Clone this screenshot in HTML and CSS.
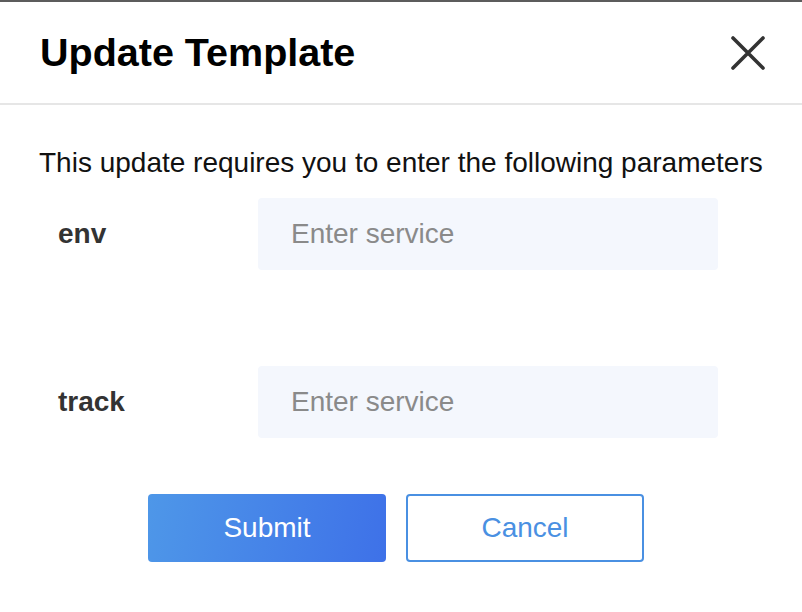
FILE: index.html
```html
<!DOCTYPE html>
<html>
<head>
<meta charset="utf-8">
<link rel="stylesheet" href="styles.css">
</head>
<body>
<div class="topband"></div>
<div class="dialog">
  <header class="head">
    <h1 class="title">Update Template</h1>
    <button class="close" aria-label="Close">
      <svg width="36" height="36" viewBox="0 0 36 36"><path d="M3 3 L33 33 M33 3 L3 33" stroke="#333" stroke-width="3.6" stroke-linecap="round" fill="none"/></svg>
    </button>
  </header>
  <div class="body">
    <p class="intro">This update requires you to enter the following parameters</p>
    <div class="row">
      <label class="label">env</label>
      <input class="field" placeholder="Enter service">
    </div>
    <div class="row">
      <label class="label">track</label>
      <input class="field" placeholder="Enter service">
    </div>
    <div class="actions">
      <button class="btn primary">Submit</button>
      <button class="btn ghost">Cancel</button>
    </div>
  </div>
</div>
</body>
</html>
```
FILE: styles.css
```css
* { box-sizing: border-box; }
html, body { margin: 0; padding: 0; background: #fff; }
body { font-family: "Liberation Sans", Arial, sans-serif; color: #111; }
.topband { height: 2px; background: #5c5c5c; }
.dialog { background: #fff; }
.head {
  height: 103px;
  border-bottom: 2px solid #e6e6e6;
  display: flex;
  align-items: center;
  justify-content: space-between;
  padding: 0 36px 0 40px;
}
.title { margin: 0; font-size: 39.5px; font-weight: bold; color: #000; }
.close { border: 0; background: none; padding: 0; width: 36px; height: 36px; display: flex; }
.body { padding: 40px 0 0 39px; }
.intro { margin: 0; font-size: 28px; line-height: 36px; color: #111; }
.row { display: flex; align-items: center; margin-top: 17px; margin-bottom: 96px; }
.row + .row { margin-top: 0; margin-bottom: 56px; }
.label { width: 219px; padding-left: 19px; font-size: 28px; font-weight: bold; color: #333; }
.field {
  width: 460px; height: 72px; border: 0; border-radius: 4px;
  background: #f4f7fd; padding: 0 33px;
  font-family: inherit; font-size: 28px; color: #333;
}
.field::placeholder { color: #8a8a8a; }
.actions { display: flex; gap: 20px; padding-left: 109px; }
.btn {
  width: 238px; height: 68px; border-radius: 4px;
  font-family: inherit; font-size: 28px;
}
.primary { border: 0; color: #fff; background: linear-gradient(100deg, #4e97e8, #3e71e8); }
.ghost { border: 2px solid #4a90e2; background: #fff; color: #4a90e2; }
```
